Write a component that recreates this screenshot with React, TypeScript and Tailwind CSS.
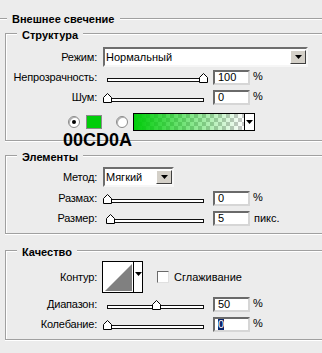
import React from "react";

const Arrow = () => (
  <svg width="7" height="4" viewBox="0 0 7 4">
    <path d="M0 0H7L3.5 4Z" fill="#000" />
  </svg>
);

const Thumb = ({ left }: { left: number }) => (
  <svg className="absolute top-[3px]" style={{ left }} width="9" height="10" viewBox="0 0 9 10">
    <path d="M0.5 9.5V4.5L4.5 0.5L8.5 4.5V9.5Z" fill="#fff" stroke="#000" />
  </svg>
);

// value given as pixel offset along the track (0..96)
const Slider = ({ pos }: { pos: number }) => (
  <div className="relative ml-[6px] h-[15px] w-[106px] pl-[4px] pt-[8px]">
    <div className="h-[4px] w-[97px] border border-[#111] bg-white" />
    <Thumb left={4 + pos - 4} />
  </div>
);

const Field = ({ children }: { children: React.ReactNode }) => (
  <div className="ml-[4px] flex h-[15px] w-[37px] items-center border-2 border-t-[#6a6a6a] border-l-[#6a6a6a] border-r-[#d6d6d6] border-b-[#d6d6d6] bg-white pl-[3px] leading-[11px]">
    {children}
  </div>
);

const Label = ({ children }: { children: React.ReactNode }) => (
  <div className="w-[91px] text-right leading-[13px] tracking-[-0.2px]">{children}</div>
);

const Select = ({ value, width }: { value: string; width: string }) => (
  <div className={`ml-[6px] flex h-[20px] items-center border-2 border-t-[#6e6e6e] border-l-[#6e6e6e] border-r-[#f6f6f6] border-b-[#f6f6f6] bg-white ${width}`}>
    <span className="flex-1 pl-[1px] leading-[13px]">{value}</span>
    <div className="flex h-[14px] w-[16px] items-center justify-center border border-t-white border-l-white border-r-[#404040] border-b-[#404040] bg-[#d4d0c8]">
      <Arrow />
    </div>
  </div>
);

const Radio = ({ on }: { on?: boolean }) => (
  <div className="flex h-[12px] w-[12px] items-center justify-center rounded-full border border-[#8a8a8a] bg-white shadow-[inset_1px_1px_0_#b0b0b0]">
    {on && <div className="h-[4px] w-[4px] rounded-full bg-black" />}
  </div>
);

const Group = ({ title, className, children }: { title: string; className?: string; children: React.ReactNode }) => (
  <div className={`relative ml-[5px] w-[340px] border border-[#a0a0a0] shadow-[inset_1px_1px_0_#fff,0_1px_0_#fff] ${className ?? ""}`}>
    <div className="absolute -top-[5px] left-[11px] bg-[#ececec] px-[5px] text-[11px] font-bold leading-[13px]">{title}</div>
    {children}
  </div>
);

export default function App() {
  return (
    <div className="relative flex h-[353px] w-[322px] flex-col overflow-hidden bg-[#ececec] font-['Liberation_Sans',Arial,sans-serif] text-[11px] text-black">
      <div className="mt-[13px] flex items-start">
        <div className="mt-[5px] h-[2px] w-[7px] border-t border-[#a0a0a0] bg-white" />
        <div className="ml-[5px] font-bold leading-[13px]">Внешнее свечение</div>
        <div className="ml-[6px] mt-[5px] h-[2px] flex-1 border-t border-[#a0a0a0] bg-white" />
      </div>

      <Group title="Структура" className="mt-[7px] pt-[13px] pb-[9px]">
        <div className="flex h-[20px] items-center">
          <Label>Режим:</Label>
          <Select value="Нормальный" width="w-[205px]" />
        </div>
        <div className="mt-[3px] flex h-[15px] items-center">
          <Label>Непрозрачность:</Label>
          <Slider pos={96} />
          <Field>100</Field>
          <span className="ml-[3px] -mt-[3px]">%</span>
        </div>
        <div className="mt-[5px] flex h-[15px] items-center">
          <Label>Шум:</Label>
          <Slider pos={0} />
          <Field>0</Field>
          <span className="ml-[3px] -mt-[3px]">%</span>
        </div>
        <div className="mt-[8px] flex h-[18px] items-center">
          <div className="ml-[62px]">
            <Radio on />
          </div>
          <div className="ml-[6px] h-[14px] w-[16px] border border-[#8a8a8a] bg-[#00cd0a]" />
          <div className="ml-[14px]">
            <Radio />
          </div>
          <div className="ml-[5px] flex h-[18px] w-[122px] border border-black">
            <div className="relative flex-1 [background-image:conic-gradient(#c8c8c8_25%,#fff_0_50%,#c8c8c8_0_75%,#fff_0)] [background-size:8px_8px]">
              <div className="h-full w-full bg-linear-to-r from-[#00cd0a] to-transparent" />
            </div>
            <div className="flex w-[10px] items-center justify-center border-l border-black bg-white">
              <Arrow />
            </div>
          </div>
        </div>
      </Group>

      <Group title="Элементы" className="mt-[14px] pt-[11px] pb-[7px]">
        <div className="flex h-[20px] items-center">
          <Label>Метод:</Label>
          <Select value="Мягкий" width="w-[71px]" />
        </div>
        <div className="mt-[4px] flex h-[15px] items-center">
          <Label>Размах:</Label>
          <Slider pos={0} />
          <Field>0</Field>
          <span className="ml-[3px] -mt-[3px]">%</span>
        </div>
        <div className="mt-[5px] flex h-[15px] items-center">
          <Label>Размер:</Label>
          <Slider pos={3} />
          <Field>5</Field>
          <span className="ml-[4px]">пикс.</span>
        </div>
      </Group>

      <Group title="Качество" className="mt-[16px] pt-[10px] pb-[7px]">
        <div className="flex h-[32px] items-center">
          <Label>Контур:</Label>
          <div className="ml-[5px] flex h-[32px] w-[41px] border border-black bg-white">
            <svg width="30" height="30" viewBox="0 0 30 30">
              <path d="M2 29L29 2V29Z" fill="#808080" />
            </svg>
            <div className="flex flex-1 justify-center border-l border-black pt-[10px]">
              <Arrow />
            </div>
          </div>
          <div className="ml-[14px] h-[12px] w-[12px] border border-t-[#6a6a6a] border-l-[#6a6a6a] border-r-[#e0e0e0] border-b-[#e0e0e0] bg-white" />
          <span className="ml-[5px] leading-[13px]">Сглаживание</span>
        </div>
        <div className="mt-[4px] flex h-[15px] items-center">
          <Label>Диапазон:</Label>
          <Slider pos={49} />
          <Field>50</Field>
          <span className="ml-[3px] -mt-[3px]">%</span>
        </div>
        <div className="mt-[5px] flex h-[15px] items-center">
          <Label>Колебание:</Label>
          <Slider pos={0} />
          <Field>
            <span className="bg-[#0a246a] text-white">0</span>
          </Field>
          <span className="ml-[3px] -mt-[3px]">%</span>
        </div>
      </Group>

      <div className="absolute left-[63px] top-[131px] text-[18px] font-bold leading-[18px]">00CD0A</div>
    </div>
  );
}
